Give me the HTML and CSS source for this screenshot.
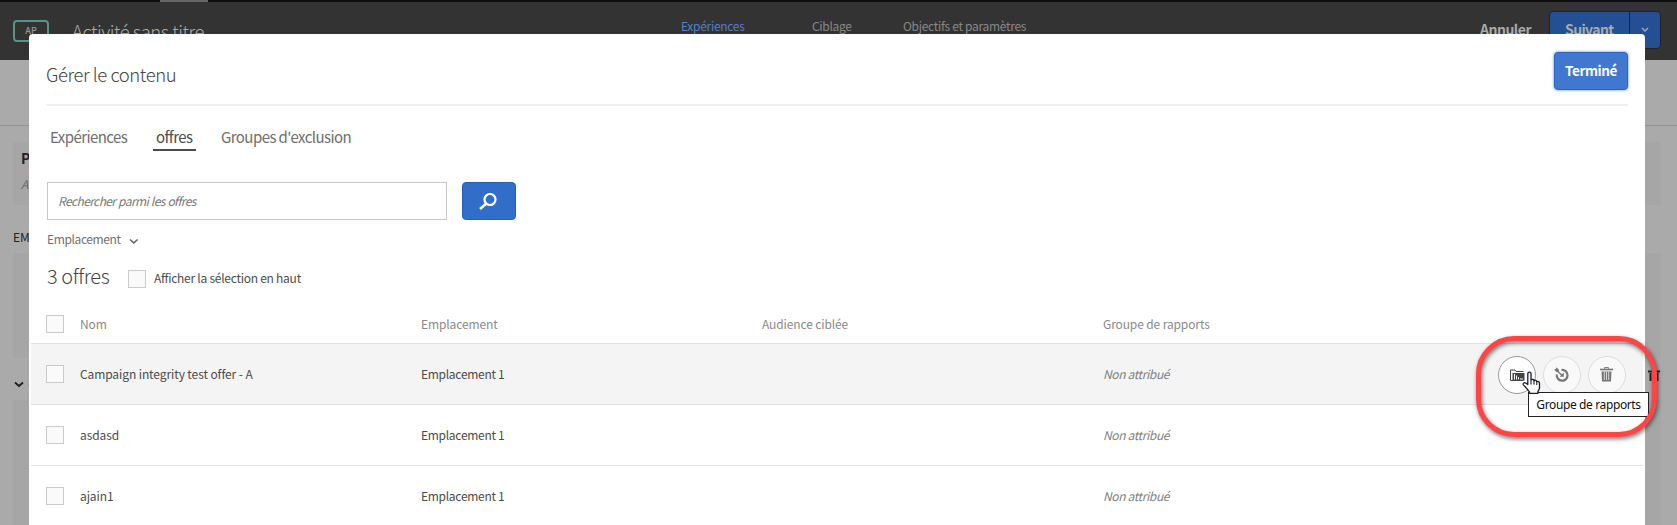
FILE: index.html
```html
<!DOCTYPE html>
<html lang="fr">
<head>
<meta charset="utf-8">
<title>Gérer le contenu</title>
<link rel="stylesheet" href="styles.css">
</head>
<body>
<div class="page">
  <div class="strip"><span class="strip-tab"></span></div>
  <header class="topbar">
    <div class="activity"><span class="avatar">AP</span><span class="activity-name">Activité sans titre</span></div>
    <nav class="steps"><span class="step active s1">Expériences</span><span class="step s2">Ciblage</span><span class="step s3">Objectifs et paramètres</span></nav>
    <div class="top-actions">
      <span class="cancel">Annuler</span>
      <div class="next"><span class="next-label">Suivant</span><span class="next-more"><svg width="8" height="6" viewBox="0 0 8 6"><path d="M1 1l3 3 3-3" fill="none" stroke="#aaa" stroke-width="1.4"/></svg></span></div>
    </div>
  </header>
  <section class="subbar"></section>
  <section class="backdrop">
    <div class="panel panel-info"><b>P</b><i>A</i></div>
    <div class="panel-title">EM</div>
    <div class="panel panel-body"></div>
    <div class="panel-head">
      <span class="panel-toggle"><svg width="10" height="7" viewBox="0 0 10 7"><path d="M1 1.5l4 3.5 4-3.5" fill="none" stroke="#1c1c1c" stroke-width="1.7"/></svg><span>C</span></span>
      <svg class="panel-trash" width="12" height="12" viewBox="0 0 12 12"><path d="M0 1.5h12v2H0zM1.5 4h2v8h-2zM5 4h2v8H5zM8.500 4h2v8h-2z" fill="#222"/></svg>
    </div>
    <div class="panel panel-rest"></div>
  </section>
</div>

<main class="modal">
  <div class="modal-head"><h1>Gérer le contenu</h1><button class="done">Terminé</button></div>
  <nav class="tabs"><span class="tab t1">Expériences</span><span class="tab t2 selected">offres</span><span class="tab t3">Groupes d'exclusion</span></nav>
  <div class="search">
    <div class="search-field">Rechercher parmi les offres</div>
    <button class="search-btn"><svg width="18" height="17" viewBox="0 0 18 17"><circle cx="11" cy="6.500" r="5.500" fill="none" stroke="#fff" stroke-width="2.200"/><path d="M7.300 10.500L1 16" stroke="#fff" stroke-width="2.500"/></svg></button>
  </div>
  <div class="filter"><span class="filter-label">Emplacement</span><svg width="10" height="7" viewBox="0 0 10 7"><path d="M1 1.500l3.800 3.400L8.600 1.500" fill="none" stroke="#666" stroke-width="1.500"/></svg></div>
  <div class="summary"><span class="count">3 offres</span><span class="check"></span><span class="summary-label">Afficher la sélection en haut</span></div>
  <div class="table">
    <div class="row head"><span class="check"></span><span class="cell">Nom</span><span class="cell">Emplacement</span><span class="cell">Audience ciblée</span><span class="cell">Groupe de rapports</span></div>
    <div class="row hovered"><span class="check"></span><span class="cell name">Campaign integrity test offer - A</span><span class="cell">Emplacement 1</span><span></span><em class="cell">Non attribué</em>
      <div class="actions">
        <span class="action focus"><svg width="15" height="12" viewBox="0 0 15 12"><path d="M.5 11.500V1h4.500l1 1.500h7.500" fill="none" stroke="#444"/><path d="M2.500 4H14.500v7.500H2.500z" fill="#444"/><path d="M.5 11.500h13" stroke="#444"/><path d="M4.500 5v5.500M6.500 6.500v4M8.500 8v2.500M10 10h3" stroke="#fff" stroke-width="1"/></svg></span>
        <span class="action"><svg width="16" height="16" viewBox="0 0 16 16"><path d="M7.500 2.900a5.400 5.400 0 1 1-4.700 4.600" fill="none" stroke="#777" stroke-width="2.200"/><path d="M1.500 2.200L8.200 8.500" stroke="#777" stroke-width="1.500"/><path d="M0 2.500l2-.2.200-2L4.800 2.500v2.300L2.400 5z" fill="#777"/><path d="M9.800 5.600v4.200H5.600z" fill="#777"/></svg></span>
        <span class="action"><svg class="trash" width="13" height="15" viewBox="0 0 13 15"><path d="M4.500 1.800V.6h4v1.200" fill="none" stroke="#777"/><path d="M0 1.700h13v1.600H0z" fill="#777"/><path d="M1.500 4.500h10l-.5 10H2z" fill="#777"/><path d="M4.300 4.500v8.500M6.500 4.500v8.500M8.700 4.500v8.500" stroke="#eee" stroke-width=".8"/></svg></span>
      </div>
    </div>
    <div class="row"><span class="check"></span><span class="cell name">asdasd</span><span class="cell">Emplacement 1</span><span></span><em class="cell">Non attribué</em></div>
    <div class="row"><span class="check"></span><span class="cell name">ajain1</span><span class="cell">Emplacement 1</span><span></span><em class="cell">Non attribué</em></div>
  </div>
</main>

<div class="tooltip">Groupe de rapports</div>
<div class="highlight"></div>
<svg class="cursor" width="19" height="24" viewBox="0 0 19 24"><path d="M5.800 13.500V2.800C5.800.6 9 .6 9 2.800v6c1-.9 2.700-.4 3 .8 1-.7 2.500-.2 2.800 1 1.200-.6 2.700.2 2.700 1.600v4.500c0 1.800-.9 2.600-1.600 4v1.600H7.500v-1.500C6 19 3.500 16 1.400 13.900c-.9-1.200.7-2.900 2.200-1.900z" fill="#fff" stroke="#171c2c" stroke-width="1.300" stroke-linejoin="round"/><path d="M9 8.500v5M12 9.500v4M14.800 10.500v3.500" stroke="#171c2c" stroke-width="1.100"/></svg>
</body>
</html>
```
FILE: styles.css
```css
* { box-sizing: border-box; }
body { margin: 0; height: 525px; overflow: hidden; position: relative; background: #aaa; font-family: "Noto Sans CJK SC", "Noto Sans", sans-serif; font-size: 13px; color: #4b4b4b; }
svg { display: block; flex: none; }
span, em, i, b { white-space: nowrap; }
button { border: 0; padding: 0; font: inherit; display: flex; align-items: center; justify-content: center; }

.page { height: 525px; display: flex; flex-direction: column; }
.strip { height: 2px; background: #0d0d0d; padding-left: 160px; flex: none; }
.strip-tab { display: block; width: 48px; height: 2px; background: #666; }
.topbar { height: 58px; flex: none; background: #333; display: flex; align-items: flex-start; }
.activity { width: 681px; display: flex; padding: 18px 0 0 13px; }
.avatar { width: 36px; height: 22px; border: 2px solid #56948a; border-radius: 4px; font-size: 9px; line-height: 17px; text-align: center; color: #999; font-weight: 500; }
.activity-name { margin: -1px 0 0 23px; font-size: 18.500px; line-height: 24px; color: #aaa; font-weight: 300; letter-spacing: -.5px; }
.steps { display: flex; padding-top: 14px; line-height: 20px; color: #888; width: 798px; font-size: 12px; letter-spacing: -.3px; }
.s1 { width: 131px; }
.s2 { width: 91px; }
.step.active { color: #527fc5; }
.top-actions { display: flex; padding-top: 8px; }
.cancel { width: 70px; padding-left: 1px; color: #aaa; font-weight: 700; font-size: 14px; line-height: 39px; letter-spacing: -.5px; }
.next { display: flex; width: 112px; height: 38px; margin-top: 1px; border: 1px solid #222; border-radius: 4px; background: #254f94; color: #aaa; font-weight: 700; font-size: 14px; line-height: 35px; letter-spacing: -.6px; }
.next-label { width: 80px; padding-left: 15px; border-right: 1px solid #222; }
.next-more { flex: 1; display: flex; align-items: center; justify-content: center; }
.subbar { height: 66px; flex: none; border-bottom: 1px solid #929292; }
.backdrop { padding: 16px 16px 0 13px; display: flex; flex-direction: column; flex: 1; }
.panel { background: #a6a6a6; }
.panel-info { height: 63px; padding: 4px 8px; display: flex; flex-direction: column; color: #222; font-size: 14px; line-height: 24px; }
.panel-info i { color: #666; font-size: 12px; line-height: 28px; }
.panel-title { height: 48px; padding-top: 20px; line-height: 24px; font-size: 12px; color: #222; }
.panel-body { height: 105px; }
.panel-head { height: 42px; display: flex; align-items: center; justify-content: space-between; padding-top: 2px; }
.panel-toggle { display: flex; align-items: center; gap: 4px; padding-left: 1px; color: #666; padding-top: 9px; line-height: 12px; }
.panel-trash { margin: -11px 1px 0 0; }
.panel-rest { flex: 1; }

.modal { position: absolute; left: 29px; top: 34px; width: 1616px; height: 500px; background: #fff; border-radius: 4px 4px 0 0; }
.modal-head { margin: 0 17px; height: 72px; border-bottom: 2px solid #f0f0f0; display: flex; justify-content: space-between; padding-top: 18px; }
h1 { margin: 0; font-size: 18.500px; line-height: 45px; font-weight: 300; color: #444; letter-spacing: -.45px; }
.done { width: 74px; height: 38px; border: 1px solid #2a65c2; border-radius: 4px; background: #4178cf; box-shadow: 0 0 2px 1px #a9c3ec; color: #fff; font-size: 13.500px; font-weight: 700; letter-spacing: -.4px; padding-bottom: 2px; }
.tabs { display: flex; padding: 17px 0 0 17px; height: 58px; font-size: 15px; letter-spacing: -.57px; color: #6e6e6e; }
.tab { height: 28px; line-height: 28px; padding: 0 4px; }
.t1 { width: 107px; }
.t2 { width: 43px; margin-right: 21px; }
.tab.t2 { padding-left: 3px; }
.tab.selected { color: #4b4b4b; border-bottom: 2px solid #4b4b4b; }
.search { height: 56px; padding: 18px 0 0 18px; display: flex; gap: 15px; }
.search-field { width: 400px; height: 38px; border: 1px solid #c8c8c8; padding-left: 10px; line-height: 36px; font-size: 12px; letter-spacing: -.6px; word-spacing: .6px; font-style: italic; color: #777; }
.search-btn { width: 54px; height: 38px; border: 1px solid #2360bd; border-radius: 4px; background: #326ec8; }
.search-btn svg { margin-right: 2px; }
.filter { padding: 9px 0 0 18px; height: 40px; display: flex; gap: 8px; line-height: 20px; font-size: 12px; letter-spacing: -.38px; color: #707070; }
.filter svg { margin-top: 9px; }
.filter-label { width: 74px; }
.summary { height: 50px; display: flex; padding-left: 18px; }
.count { width: 81px; font-size: 20px; line-height: 32px; font-weight: 300; color: #444; letter-spacing: -.42px; }
.check { width: 18px; height: 18px; border: 1px solid #cacaca; background: #fafafa; }
.summary .check { margin-top: 10px; }
.summary-label { margin-left: 8px; line-height: 36px; font-size: 12px; letter-spacing: -.26px; }
.table { margin: -1px 2px 0; }
.row { height: 61px; border-top: 1px solid #e1e1e1; display: grid; grid-template-columns: 34px 341px 341px 341px 1fr auto; align-items: center; padding: 0 17px 0 15px; font-size: 12px; }
.cell { padding-bottom: 2px; letter-spacing: -.29px; }
.cell.name { letter-spacing: -.1px; }
.row.head { height: 34px; border: 0; color: #8a8a8a; padding-bottom: 4px; }
.row.head .cell { letter-spacing: -.12px; }
.row em.cell { color: #808080; letter-spacing: -.38px; }
.row.hovered { background: #f4f4f4; }
.actions { display: flex; gap: 7px; padding-top: 1px; }
.action { width: 38px; height: 38px; border: 1px solid #ddd; border-radius: 50%; background: #f9f9f9; display: flex; align-items: center; justify-content: center; }
.action.focus { border-color: #999; background: #fff; }
.trash { margin-right: 1px; }

.tooltip { position: absolute; left: 1528px; top: 392px; width: 121px; height: 25px; border: 1px solid #222; background: #fff; color: #111; font: 12px/24px "Noto Sans", sans-serif; letter-spacing: -.38px; text-align: center; white-space: nowrap; }
.highlight { position: absolute; left: 1476px; top: 336px; width: 181px; height: 101px; border: 5px solid #fe4444; border-radius: 38px; filter: drop-shadow(1px 2px 2px rgba(0,0,0,.55)); }
.cursor { position: absolute; left: 1522px; top: 371px; }
```
